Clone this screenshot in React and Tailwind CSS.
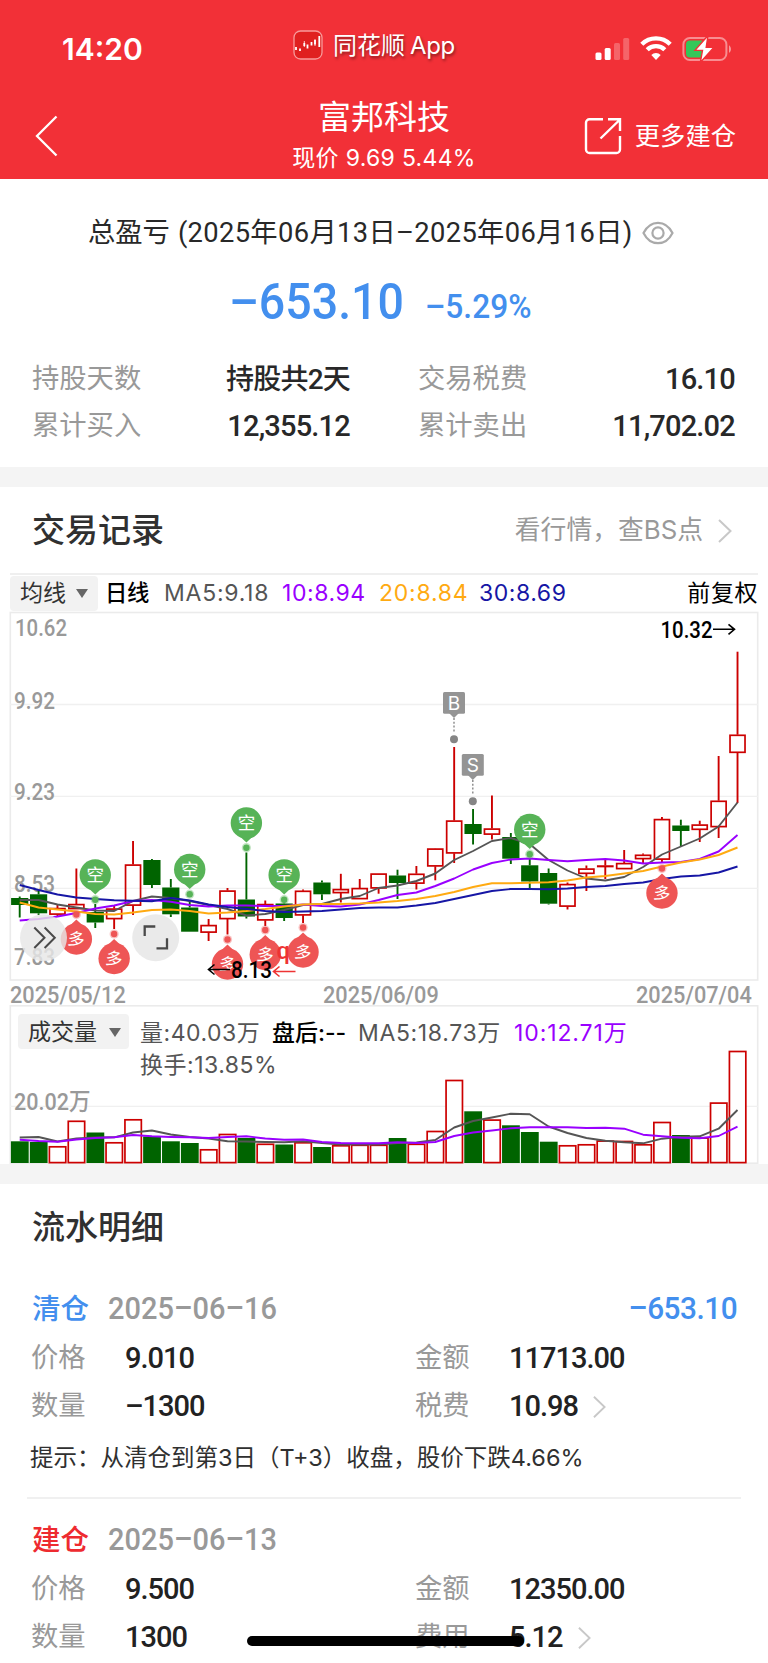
import React from "react";

const CJK = "font-['Inter','Noto_Sans_CJK_SC',sans-serif]";
const DIN = "font-['Roboto','Noto_Sans_CJK_SC',sans-serif]";

const STEP = 18.89;
const px = (i) => 19.7 + STEP * i;

// [rising, high, top, bottom, low] in chart coordinates
const candles = [
  [0, 896.5, 898, 905, 917.5], [0, 891, 894.3, 913.3, 915], [1, 905, 908, 914.5, 917],
  [1, 868.5, 904, 909, 909], [0, 904, 912, 922.5, 928], [1, 906, 908.5, 919, 929],
  [1, 841, 864.5, 905.5, 915], [0, 859, 860, 885, 888], [0, 879, 887.5, 914.3, 917],
  [0, 900, 907.5, 931.7, 931.7], [1, 919, 925, 932.5, 941], [1, 888, 890.5, 919, 934.5],
  [0, 852.5, 899.5, 916.5, 918.5], [1, 900.5, 904, 920.3, 926], [0, 903, 903.5, 918, 921],
  [1, 889.5, 890.7, 915.3, 923], [0, 880.5, 882.5, 894.3, 900], [1, 873.8, 889, 893, 902.5],
  [1, 879, 888, 899, 899], [1, 873.5, 873.5, 888.3, 893.7], [0, 869.7, 875.5, 883, 899],
  [1, 866, 873.7, 883.5, 889.5], [1, 848.3, 848.5, 866.3, 880.3], [1, 747, 820.5, 853.3, 863],
  [0, 809, 824, 834, 844.5], [1, 795.5, 828.5, 834.5, 839.5], [0, 833, 837, 858.7, 864],
  [0, 858, 865.3, 881.5, 889], [0, 868.5, 873, 903.7, 904.5], [1, 882.5, 884, 906.5, 909.5],
  [1, 865.5, 868.5, 873.7, 891], [1, 860, 865.5, 866.5, 879], [1, 850, 863, 869, 869],
  [1, 853.5, 854.7, 859, 864], [1, 817, 819, 859.5, 862], [0, 819.7, 825.5, 831, 846.5],
  [1, 820.7, 824.5, 829.7, 842], [1, 756, 800.7, 827, 838], [1, 651.7, 734.7, 752.7, 803],
];

const ma5 = [900, 900, 904.5, 907.5, 910.5, 911, 901, 896.5, 898, 901, 905, 909, 915.5, 914, 910, 905, 904, 899, 896, 888, 885.5, 881, 873.5, 860, 851, 841, 838, 844, 860, 870.5, 878.5, 880.5, 877, 867, 854.5, 846.5, 838.5, 826.5, 802.5];
const ma10 = [920.5, 919, 916.5, 913, 908.5, 905.5, 901, 900, 901.7, 905, 906.5, 905.5, 905.5, 906, 906, 904.5, 906, 906.5, 904.5, 900, 895, 892.5, 886, 878.5, 869.5, 863, 859.5, 858.5, 860, 861.3, 860, 859, 860.5, 863.5, 862.5, 862, 859, 851.5, 835];
const ma20 = [902.5, 907.5, 909.5, 911.5, 914, 914.5, 912.5, 910, 909.5, 911, 913.5, 912.5, 911, 909, 906.5, 904.5, 904, 904, 903.5, 902.5, 901, 899, 896, 892, 887, 883.3, 883.3, 882.7, 882.3, 880.5, 877.5, 876, 873.5, 871, 866.5, 862.5, 859.5, 855, 847.5];
const ma30 = [885, 890, 894.5, 897.5, 899, 900.3, 900.7, 901.3, 898, 900.5, 904.5, 907, 909, 911, 912, 911.5, 911, 909.5, 908, 907.5, 907.5, 905.5, 903, 899, 895, 891, 889, 889, 889.3, 888.5, 887, 886, 884, 882.5, 879, 876.5, 875.5, 872.5, 866.5];

const vols = [1141.3, 1142, 1146, 1120.5, 1132.5, 1142, 1119, 1136.5, 1141.3, 1143, 1149, 1133.7, 1138, 1143.5, 1144.5, 1142, 1147, 1145, 1144.5, 1144.5, 1138, 1143.5, 1130.7, 1079.7, 1111.3, 1119.3, 1125.3, 1132, 1141.7, 1145, 1144, 1140.3, 1140.7, 1144, 1121.7, 1135, 1137.3, 1102.3, 1050.7];
const vma5 = [1137.5, 1137, 1141.5, 1138.5, 1137.5, 1137.3, 1132.5, 1130.5, 1134.5, 1137, 1138.5, 1141.3, 1141.5, 1142, 1142.3, 1141.3, 1143, 1144.5, 1144.5, 1144.5, 1143, 1142.5, 1140, 1127.5, 1121, 1117.5, 1113.7, 1114.3, 1126.5, 1133, 1138, 1140.7, 1142.3, 1143.3, 1138.7, 1136.7, 1136.3, 1128.7, 1110];
const vma10 = [1139.7, 1141, 1141.7, 1139.5, 1138, 1137.3, 1135, 1136.3, 1137, 1137.3, 1138, 1137, 1136.3, 1138.5, 1139.7, 1139.5, 1142, 1143, 1143.3, 1143.3, 1142.3, 1143, 1142, 1136, 1132.5, 1130.5, 1128.3, 1127.3, 1127.3, 1127.3, 1128, 1127.7, 1128.7, 1134.7, 1136.3, 1137.7, 1138.3, 1136, 1126.7];

const path = (ys) => ys.map((y, i) => `${i ? "L" : "M"}${px(i).toFixed(1)} ${y}`).join("");

function Line({ ys, color }) {
  return <path d={path(ys)} fill="none" stroke={color} strokeWidth="1.9" strokeLinejoin="round" />;
}

function Candle({ x, data }) {
  const [up, high, top, bottom, low] = data;
  const c = up ? "#cc0000" : "#006400";
  return (
    <g stroke={c} strokeWidth="1.9">
      {high < top && <line x1={x} x2={x} y1={high} y2={top} />}
      {low > bottom && <line x1={x} x2={x} y1={bottom} y2={low} />}
      {up ? (
        <rect x={x - 7.5} y={top + 0.6} width="15" height={Math.max(bottom - top - 1, 0.4)} fill="none" strokeWidth="1.7" />
      ) : (
        <rect x={x - 8.6} y={top} width="17.2" height={bottom - top} fill={c} stroke="none" />
      )}
    </g>
  );
}

function Short({ i, y }) {
  const x = px(i);
  return (
    <g fill="#57b357">
      <circle cx={x} cy={y + 24.7} r="4.6" opacity="0.35" />
      <circle cx={x} cy={y + 24.7} r="3.2" />
      <path d={`M${x - 8} ${y + 12}L${x} ${y + 19.5}L${x + 8} ${y + 12}Z`} />
      <circle cx={x} cy={y} r="15.7" />
      <text x={x} y={y + 6.4} fill="#fff" fontSize="17.5" textAnchor="middle">空</text>
    </g>
  );
}

function Long({ i, y }) {
  const x = px(i);
  return (
    <g fill="#ee5555">
      <circle cx={x} cy={y - 24.5} r="4.6" opacity="0.35" />
      <circle cx={x} cy={y - 24.5} r="3.2" />
      <path d={`M${x - 8} ${y - 12}L${x} ${y - 19.5}L${x + 8} ${y - 12}Z`} />
      <circle cx={x} cy={y} r="15.7" />
      <text x={x} y={y + 6.2} fill="#fff" fontSize="17" textAnchor="middle" transform={`rotate(8 ${x} ${y})`}>多</text>
    </g>
  );
}

function Trade({ x, y, label }) {
  return (
    <g fill="#949494">
      <rect x={x - 11} y={y} width="22" height="21.7" rx="1.5" />
      <path d={`M${x - 5} ${y + 21}L${x} ${y + 26}L${x + 5} ${y + 21}Z`} />
      <line x1={x} x2={x} y1={y + 26} y2={y + 41} stroke="#888" strokeWidth="1.4" strokeDasharray="2 1.8" />
      <circle cx={x} cy={y + 47.3} r="4" fill="#858585" />
      <text x={x} y={y + 17.8} fill="#fff" fontSize="19" textAnchor="middle" className="font-['Inter']">{label}</text>
    </g>
  );
}

function Axis({ x, y, w, color = "#999", children }) {
  return (
    <text x={x} y={y} textLength={w} lengthAdjust="spacingAndGlyphs" fontSize="23.5" fontWeight="500" fill={color} className="font-['Roboto','Noto_Sans_CJK_SC']">
      {children}
    </text>
  );
}

function PriceChart() {
  return (
    <svg viewBox="0 611 768 370" className={`block h-[370px] w-[768px] overflow-visible ${CJK}`}>
      <g stroke="#ebebeb" strokeWidth="1.3" fill="none">
        <rect x="10.3" y="612.5" width="747.4" height="367.5" strokeWidth="1.6" />
        <path d="M10 704.5H758M10 796.3H758M10 888.3H758" stroke="#f0f0f0" />
      </g>
      <Axis x={15} y={636.3} w={52}>10.62</Axis>
      <Axis x={14} y={708.5} w={41}>9.92</Axis>
      <Axis x={14} y={800} w={41}>9.23</Axis>
      <Axis x={14} y={892} w={41}>8.53</Axis>
      <Axis x={14} y={964.5} w={41}>7.83</Axis>
      {candles.map((c, i) => <Candle key={i} x={px(i)} data={c} />)}
      <Line ys={ma5} color="#555555" />
      <Line ys={ma10} color="#9900ff" />
      <Line ys={ma20} color="#ffaa11" />
      <Line ys={ma30} color="#1616a5" />
      <Short i={4} y={875} />
      <Short i={9} y={869.5} />
      <Short i={12} y={823} />
      <Short i={14} y={875} />
      <Short i={27} y={829.5} />
      <Long i={3} y={939} />
      <Long i={5} y={958.5} />
      <Long i={11} y={964} />
      <Long i={13} y={954.5} />
      <Long i={15} y={952} />
      <Long i={34} y={893} />
      <Trade x={454} y={692} label="B" />
      <Trade x={472.8} y={754} label="S" />
      <Axis x={660.5} y={637.5} w={52} color="#000">10.32</Axis>
      <path d="M713 629.3H734M728.5 624.3L734.5 629.3L728.5 634.3" fill="none" stroke="#000" strokeWidth="1.6" />
      <path d="M230 969.5H209M214.5 964.5L208.5 969.5L214.5 974.5" fill="none" stroke="#000" strokeWidth="1.6" />
      <Axis x={231} y={977.5} w={41} color="#000">8.13</Axis>
      <path d="M295.5 971.5H274M279.5 966.5L273.5 971.5L279.5 976.5" fill="none" stroke="#ee3333" strokeWidth="1.6" />
      <text x="276.5" y="959" fontSize="23.5" fontWeight="500" fill="#ee3333" className="font-['Roboto']">q</text>
      <circle cx="43.5" cy="937.7" r="23.5" fill="#e6e6e6" opacity="0.82" />
      <circle cx="155.7" cy="937.7" r="23.5" fill="#e8e8e8" opacity="0.92" />
      <path d="M34.3 927.5L44.5 937.7L34.3 948M44.6 927.5L54.8 937.7L44.6 948" fill="none" stroke="#4a4a4a" strokeWidth="2" />
      <path d="M144.7 936V926.5H155.3M156.5 948.3H167V938.3" fill="none" stroke="#4a4a4a" strokeWidth="2.3" />
    </svg>
  );
}

function VolumeChart() {
  return (
    <svg viewBox="0 1005 768 159" className="absolute top-0 left-0 h-[159px] w-[768px]">
      <rect x="10.3" y="1005.8" width="747.4" height="157.4" fill="none" stroke="#ebebeb" strokeWidth="1.6" />
      <path d="M10 1106.3H758" stroke="#f0f0f0" strokeWidth="1.3" />
      <Axis x={14} y={1110} w={76.5}>20.02万</Axis>
      {vols.map((y, i) =>
        candles[i][0] ? (
          <rect key={i} x={px(i) - 8.1} y={y + 0.8} width="16.4" height={1161.8 - y} fill="#fff" stroke="#cc0000" strokeWidth="1.7" />
        ) : (
          <rect key={i} x={px(i) - 8.8} y={y} width="17.8" height={1163 - y} fill="#006400" />
        )
      )}
      <Line ys={vma5} color="#555555" />
      <Line ys={vma10} color="#9900ff" />
    </svg>
  );
}

function Chevron({ className, color = "#c8c8c8" }) {
  return (
    <svg viewBox="0 0 14 24" className={className} fill="none" stroke={color} strokeWidth="2">
      <path d="M1 1L12.5 12L1 23" />
    </svg>
  );
}

function Caret() {
  return (
    <svg viewBox="0 0 12 9" className="h-[9px] w-3" fill="#666">
      <path d="M0 0H12L6 9Z" />
    </svg>
  );
}

function StatusBar() {
  return (
    <div className="flex h-[90px] items-start">
      <div className="ml-[62px] mt-[30px] w-[231px] text-[30px] leading-[38px] font-semibold">14:20</div>
      <svg viewBox="0 0 30 30" className="mt-[29.5px] size-[30px]" fill="none" stroke="#fff">
        <rect x="1" y="1" width="28" height="28" rx="6.5" fill="#e02020" stroke="#f79a9a" strokeWidth="1.3" />
        <path d="M3 17V20M7 18.5V21M11.3 13V16M14.5 14.5V18.5M18.5 12V15.5M22 10V14.5M26.3 6V17" strokeWidth="1.8" />
        <path d="M11.3 11V17M22 9V16" strokeWidth="0.8" />
      </svg>
      <div className="ml-[10px] mt-[28px] flex text-[24px] leading-[36px] [text-shadow:1px_2px_3px_rgba(0,0,0,0.45)]">
        <span>同花顺</span>
        <span className="ml-[5px] tracking-[-0.4px]">App</span>
      </div>
      <div className="ml-auto mr-[36px] mt-[35px] flex h-[28px] items-start">
        <svg viewBox="0 0 36 24" className="mt-[2px] h-6 w-9" fill="#fff">
          <rect x="0.5" y="15.5" width="6" height="7.5" rx="1.5" />
          <rect x="9.7" y="11" width="6" height="12" rx="1.5" />
          <rect x="19" y="6" width="6" height="17" rx="1.5" opacity="0.25" />
          <rect x="28.2" y="1" width="6" height="22" rx="1.5" opacity="0.25" />
        </svg>
        <svg viewBox="0 0 32 24" className="ml-[9px] mt-px h-6 w-8" fill="none" stroke="#fff" strokeWidth="4.4">
          <path d="M1.8 8.2A20.3 20.3 0 0 1 30.2 8.2" />
          <path d="M7.2 13.7A12.6 12.6 0 0 1 24.8 13.7" />
          <path d="M16 24L11.3 19A6.7 6.7 0 0 1 20.7 19Z" fill="#fff" stroke="none" />
        </svg>
        <svg viewBox="0 0 50 28" className="ml-[10px] h-[28px] w-[50px]">
          <rect x="1.4" y="3" width="43" height="22" rx="6.5" fill="none" stroke="#fff" strokeOpacity="0.45" strokeWidth="2" />
          <path d="M47 10.2V17.8C49.6 16.2 49.6 11.8 47 10.2Z" fill="#fff" fillOpacity="0.5" />
          <path d="M8 5.5H20V22.5H8A4 4 0 0 1 4 18.5V9.5A4 4 0 0 1 8 5.5Z" fill="#34c759" />
          <path d="M26 0.5L13 15.4H20.5L18.3 27.5L32 12.2H24.2Z" fill="#fff" stroke="#f23037" strokeWidth="1.4" />
        </svg>
      </div>
    </div>
  );
}

function TitleBar() {
  return (
    <div className="flex h-[89px] justify-between">
      <div className="w-[260px] pl-[35px] pt-[25px]">
        <svg viewBox="0 0 23 42" className="h-[42px] w-[23px]" fill="none" stroke="#fff" strokeWidth="2.3">
          <path d="M21.5 1.5L2 21L21.5 40.5" />
        </svg>
      </div>
      <div className="flex flex-col items-center whitespace-nowrap">
        <div className="mt-[4px] text-[33px] leading-[46px]">富邦科技</div>
        <div className="mt-[2px] text-[23px] leading-[32px] tracking-[0.3px]">现价 9.69 5.44%</div>
      </div>
      <div className="flex w-[260px] justify-end pr-[32px] pt-[26px]">
        <svg viewBox="0 0 40 40" className="mr-[12px] size-10" fill="none" stroke="#fff" strokeWidth="2.4">
          <path d="M20 3.2H6.5A3.5 3.5 0 0 0 3 6.7V33.5A3.5 3.5 0 0 0 6.5 37H33.5A3.5 3.5 0 0 0 37 33.5V20" />
          <path d="M17.5 22.5L36.5 4M25 3.2H37V15" />
        </svg>
        <div className="text-[25.3px] leading-[40px]">更多建仓</div>
      </div>
    </div>
  );
}

function Stat({ label, value, size = "text-[29px]" }) {
  return (
    <div className="flex h-[47px] items-center justify-between">
      <span className="text-[27.3px] text-[#999]">{label}</span>
      <span className={`${DIN} ${size} font-medium tracking-[-0.8px] text-[#282828]`}>{value}</span>
    </div>
  );
}

function Summary() {
  return (
    <section className="h-[288px] bg-white pt-[33px]">
      <div className="flex h-[42px] items-center pl-[88px] text-[27.3px] text-[#282828]">
        <span>总盈亏</span>
        <span className={`${DIN} ml-[8px] tracking-[0.35px] whitespace-nowrap`}>(2025年06月13日–2025年06月16日)</span>
        <svg viewBox="0 0 32 24" className="ml-[9px] h-6 w-8" fill="none" stroke="#aaa" strokeWidth="2.2">
          <path d="M1.5 12C5 5 10 1.8 16 1.8S27 5 30.5 12C27 19 22 22.2 16 22.2S5 19 1.5 12Z" />
          <circle cx="16" cy="12" r="5.6" />
        </svg>
      </div>
      <div className={`${DIN} flex h-[100px] items-baseline pl-[229px] pt-[14px] font-medium text-[#438fee]`}>
        <span className="w-[196px] origin-left scale-x-[0.93] text-[50px] leading-[68px]">–653.10</span>
        <span className="origin-left -translate-y-px scale-x-[0.975] text-[32.5px]">–5.29%</span>
      </div>
      <div className="mt-[2px] grid grid-cols-[318px_317px] gap-x-[68px] pl-[32px]">
        <Stat label="持股天数" value="持股共2天" size="text-[28px]" />
        <Stat label="交易税费" value="16.10" />
        <Stat label="累计买入" value="12,355.12" />
        <Stat label="累计卖出" value="11,702.02" />
      </div>
    </section>
  );
}

function Records() {
  return (
    <section className="h-[677px] bg-white">
      <div className="flex h-[86px] items-center justify-between pl-[32px] pr-[36px] pt-px">
        <h2 className="text-[33px] font-medium text-[#303030]">交易记录</h2>
        <div className="flex items-center text-[25.8px] text-[#999]">
          看行情，查BS点
          <Chevron className="ml-[15px] h-6 w-[14px]" />
        </div>
      </div>
      <div className="mx-[10px] flex h-[38px] items-center border-t-2 border-[#efefef] text-[23px] tracking-[0.55px] whitespace-nowrap">
        <div className="flex h-[35px] w-[88px] items-center rounded-[4px] bg-[#f2f2f2] pl-[10px] tracking-normal text-[#333]">
          均线
          <span className="ml-[10px]"><Caret /></span>
        </div>
        <span className="ml-[7px] w-[59px] text-[22.3px] font-medium tracking-[-0.4px] text-black">日线</span>
        <span className="w-[118px] tracking-[0.75px] text-[#555]">MA5:9.18</span>
        <span className="w-[97px] text-[#9900ff]">10:8.94</span>
        <span className="w-[100px] tracking-[0.75px] text-[#ffaa11]">20:8.84</span>
        <span className="text-[#1616a5]">30:8.69</span>
        <span className="ml-auto text-black">前复权</span>
      </div>
      <PriceChart />
      <div className={`${DIN} flex h-[24px] items-center justify-between pl-[10px] pr-[6px] pt-[4px] text-[23.5px] leading-[24px] font-medium text-[#999]`}>
        <span className="w-[126px] origin-left scale-x-[0.925]">2025/05/12</span>
        <span className="w-[126px] origin-left scale-x-[0.925]">2025/06/09</span>
        <span className="w-[126px] origin-left scale-x-[0.925]">2025/07/04</span>
      </div>
      <div className="relative h-[159px]">
        <VolumeChart />
        <div className="relative flex pl-[18px] pt-[9px] text-[23px] leading-[35px] whitespace-nowrap text-[#555]">
          <div className="flex h-[35px] w-[111px] items-center rounded-[4px] bg-[#f2f2f2] pt-px pl-[10px] text-[#333]">
            成交量
            <span className="ml-[12px]"><Caret /></span>
          </div>
          <div className="ml-[11px] pt-[2px] tracking-[0.5px]">
            <div className="flex h-[32px]">
              <span className="w-[132px]">量:40.03万</span>
              <span className="w-[86px] font-medium tracking-normal text-black">盘后:--</span>
              <span className="w-[156px] tracking-[0.65px]">MA5:18.73万</span>
              <span className="tracking-[0.9px] text-[#9900ff]">10:12.71万</span>
            </div>
            <div>换手:13.85%</div>
          </div>
        </div>
      </div>
    </section>
  );
}

function Field({ label, value, more }) {
  return (
    <div className="flex h-[48.5px] items-center">
      <span className="w-[94px] text-[27.3px] text-[#999]">{label}</span>
      <span className={`${DIN} text-[29px] font-medium tracking-[-1px] text-[#222]`}>{value}</span>
      {more && <Chevron className="ml-[15px] h-6 w-[13px]" />}
    </div>
  );
}

function Entry({ kind, color, date, profit, fields, children }) {
  return (
    <div>
      <div className="flex h-[48px] items-center pl-[32px] pr-[31px]">
        <span className={`w-[76px] text-[28.5px] font-medium ${color}`}>{kind}</span>
        <span className={`${DIN} origin-left scale-x-[0.935] text-[31px] font-medium text-[#999]`}>{date}</span>
        <span className={`${DIN} ml-auto origin-right scale-x-[0.96] text-[31px] font-medium tracking-[-0.5px] text-[#438fee]`}>{profit}</span>
      </div>
      <div className="mt-px grid grid-cols-[384px_1fr] pl-[31px]">
        {fields.map((f) => <Field key={f.label} {...f} />)}
      </div>
      {children}
    </div>
  );
}

function Details() {
  return (
    <section className="h-[480px] bg-white">
      <h2 className="h-[101px] pl-[32px] pt-[19px] text-[33px] leading-[48px] font-medium text-[#303030]">流水明细</h2>
      <Entry
        kind="清仓" color="text-[#438fee]" date="2025–06–16" profit="–653.10"
        fields={[
          { label: "价格", value: "9.010" }, { label: "金额", value: "11713.00" },
          { label: "数量", value: "–1300" }, { label: "税费", value: "10.98", more: true },
        ]}
      >
        <p className="h-[66px] pl-[30px] pt-[9px] text-[23.5px] leading-[36px] whitespace-nowrap text-[#303030]">
          提示：从清仓到第3日（T+3）收盘，股价下跌4.66%
        </p>
      </Entry>
      <div className="mx-[27px] mb-[17px] h-[2px] bg-[#f0f0f0]" />
      <Entry
        kind="建仓" color="text-[#ee2b30]" date="2025–06–13"
        fields={[
          { label: "价格", value: "9.500" }, { label: "金额", value: "12350.00" },
          { label: "数量", value: "1300" }, { label: "费用", value: "5.12", more: true },
        ]}
      />
    </section>
  );
}

export default function App() {
  return (
    <main className={`relative flex h-[1663px] w-[768px] flex-col gap-[20px] overflow-hidden bg-[#f4f4f4] ${CJK}`}>
      <div>
        <header className="h-[179px] bg-[#f23037] text-white">
          <StatusBar />
          <TitleBar />
        </header>
        <Summary />
      </div>
      <Records />
      <Details />
      <div className="absolute bottom-[17px] left-[247px] h-[10px] w-[277px] rounded-full bg-black" />
    </main>
  );
}
